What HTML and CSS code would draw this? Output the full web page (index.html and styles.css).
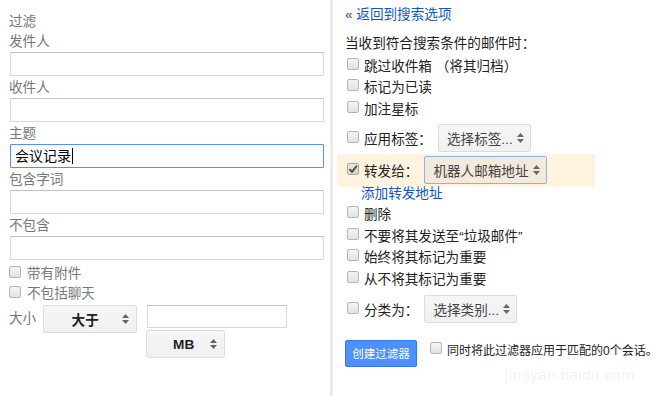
FILE: index.html
```html
<!DOCTYPE html>
<html>
  <head>
    <meta charset="utf-8">
    <link rel="stylesheet" href="styles.css">
  </head>
  <body>
    <div class="filter-page">
      <div class="search-panel">
        <div class="label">过滤</div>
        <div class="label">发件人</div>
        <input class="field" type="text" />
        <div class="label">收件人</div>
        <input class="field" type="text" />
        <div class="label">主题</div>
        <div class="field focused">会议记录<span class="caret"></span></div>
        <div class="label">包含字词</div>
        <input class="field" type="text" />
        <div class="label">不包含</div>
        <input class="field" type="text" />

        <div class="check-row"><span class="box"></span>带有附件</div>
        <div class="check-row"><span class="box"></span>不包括聊天</div>

        <div class="size-row">
          <span class="size-label">大小</span>
          <div class="select bold size-op">
            <span class="select-text">大于</span>
            <svg class="arrows" width="7" height="10" viewBox="0 0 7 10"><path d="M3.5 0 L7 4 H0 Z M0 6 H7 L3.5 10 Z" fill="#666"/></svg>
          </div>
          <div class="size-value">
            <input class="size-input" type="text" />
            <div class="select bold size-unit">
              <span class="select-text">MB</span>
              <svg class="arrows" width="7" height="10" viewBox="0 0 7 10"><path d="M3.5 0 L7 4 H0 Z M0 6 H7 L3.5 10 Z" fill="#666"/></svg>
            </div>
          </div>
        </div>
      </div>

      <div class="action-panel">
        <a class="link back" href="#">« 返回到搜索选项</a>
        <div class="heading">当收到符合搜索条件的邮件时：</div>

        <div class="option"><span class="box"></span>跳过收件箱 （将其归档）</div>
        <div class="option"><span class="box"></span>标记为已读</div>
        <div class="option"><span class="box"></span>加注星标</div>

        <div class="option with-select label-row">
          <span class="box"></span>应用标签：
          <div class="select choose">
            <span class="select-text">选择标签...</span>
            <svg class="arrows" width="7" height="10" viewBox="0 0 7 10"><path d="M3.5 0 L7 4 H0 Z M0 6 H7 L3.5 10 Z" fill="#666"/></svg>
          </div>
        </div>

        <div class="option with-select forward-row">
          <span class="box checked">
            <svg width="10" height="10" viewBox="0 0 10 10"><path d="M1.5 5.2 L4 7.8 L8.8 1.8" fill="none" stroke="#444" stroke-width="1.8"/></svg>
          </span>转发给：
          <div class="select address">
            <span class="select-text">机器人邮箱地址</span>
            <svg class="arrows" width="7" height="10" viewBox="0 0 7 10"><path d="M3.5 0 L7 4 H0 Z M0 6 H7 L3.5 10 Z" fill="#666"/></svg>
          </div>
        </div>
        <a class="link add-forward" href="#">添加转发地址</a>

        <div class="option"><span class="box"></span>删除</div>
        <div class="option"><span class="box"></span>不要将其发送至“垃圾邮件”</div>
        <div class="option"><span class="box"></span>始终将其标记为重要</div>
        <div class="option"><span class="box"></span>从不将其标记为重要</div>

        <div class="option with-select category-row">
          <span class="box"></span>分类为：
          <div class="select choose">
            <span class="select-text">选择类别...</span>
            <svg class="arrows" width="7" height="10" viewBox="0 0 7 10"><path d="M3.5 0 L7 4 H0 Z M0 6 H7 L3.5 10 Z" fill="#666"/></svg>
          </div>
        </div>

        <div class="submit-row">
          <button class="create-btn">创建过滤器</button>
          <div class="apply-all"><span class="box"></span>同时将此过滤器应用于匹配的0个会话。</div>
        </div>
      </div>
    </div>

    <div class="watermark">jingyan.baidu.com</div>
  </body>
</html>
```

FILE: styles.css
```css
body {
  margin: 0;
  background-color: #ffffff;
  font-family: "Liberation Sans", "Noto Sans CJK SC", sans-serif;
  font-size: 13.6px;
  color: #222;
}

.filter-page {
  display: flex;
  height: 396px;
}

/* left: search criteria */

.search-panel {
  width: 321px;
  padding: 12px 0 0 9px;
}

.label {
  line-height: 20px;
  height: 20px;
  color: #777;
}

.field {
  display: block;
  box-sizing: border-box;
  width: 314px;
  height: 24px;
  margin: 0 0 2px 1px;
  padding: 0 5px;
  border: 1px solid #d9d9d9;
  border-top-color: #c0c0c0;
  border-radius: 1px;
  font-family: inherit;
  font-size: 14px;
  outline: none;
}

.field.focused {
  border-color: #4d90fe;
  color: #000;
  line-height: 22px;
  padding-left: 4px;
}

.caret {
  display: inline-block;
  width: 1px;
  height: 16px;
  background-color: #000;
  vertical-align: -3px;
  margin-left: 1px;
}

.check-row {
  display: flex;
  align-items: center;
  height: 20px;
  color: #777;
}

.check-row .box {
  margin-right: 6px;
}

.box {
  display: inline-flex;
  align-items: center;
  justify-content: center;
  box-sizing: border-box;
  width: 12px;
  height: 12px;
  border: 1px solid #b5b5b5;
  border-radius: 2px;
  background: linear-gradient(#f3f3f3, #e2e2e2);
  flex-shrink: 0;
}

.box.checked {
  background: linear-gradient(#ece4d4, #ddd3c1);
  border-color: #aaa;
}

.size-row {
  display: flex;
  align-items: flex-start;
  margin-top: 3px;
}

.size-label {
  color: #777;
  line-height: 28px;
  margin-right: 7px;
}

.size-value {
  display: flex;
  flex-direction: column;
  margin-left: 9px;
}

.size-input {
  box-sizing: border-box;
  width: 140px;
  height: 23px;
  margin: 0 0 2px 1px;
  border: 1px solid #d9d9d9;
  border-top-color: #c0c0c0;
  outline: none;
}

/* shared select look */

.select {
  display: flex;
  align-items: center;
  box-sizing: border-box;
  height: 28px;
  padding: 0 7px 0 8px;
  border: 1px solid #dcdcdc;
  border-radius: 2px;
  background: linear-gradient(#f6f6f6, #f0f0f0);
  color: #444;
}

.select-text {
  flex: 1;
  white-space: nowrap;
}

.arrows {
  flex-shrink: 0;
  margin-left: 4px;
}

.select.bold {
  font-weight: bold;
  color: #222;
}

.select.bold .select-text {
  text-align: center;
}

.size-op {
  width: 94px;
}

.size-unit {
  width: 79px;
  padding-left: 14px;
}

/* right: actions */

.action-panel {
  flex: 1;
  border-left: 3px solid #ebebeb;
  padding: 5px 0 0 12px;
}

.link {
  color: #15c;
  text-decoration: none;
  display: block;
}

.back {
  line-height: 20px;
}

.heading {
  line-height: 20px;
  margin-top: 9px;
  color: #222;
}

.option {
  display: flex;
  align-items: center;
  height: 21.5px;
  white-space: nowrap;
}

.option .box {
  margin: -2px 5px 0 2px;
}

.with-select {
  height: 28px;
}

.with-select .select {
  margin-left: 6px;
}

.label-row {
  margin-top: 5px;
}

.forward-row {
  box-sizing: border-box;
  width: 258px;
  height: 33px;
  margin: 2px 0 0 -8px;
  padding-left: 8px;
  background-color: #fdf3de;
}

.choose {
  width: 93px;
}

.address {
  width: 123px;
  border-color: #8fb0e4;
  background: #f2eadb;
}

.add-forward {
  line-height: 18px;
  margin: -2px 0 0 16px;
}

.category-row {
  margin-top: 6px;
}

.submit-row {
  display: flex;
  align-items: flex-start;
  margin-top: 17px;
}

.create-btn {
  width: 72px;
  height: 27px;
  padding: 0;
  border: 1px solid #3079ed;
  border-radius: 2px;
  background-color: #4d90fe;
  color: #fff;
  font-family: inherit;
  font-size: 11.5px;
}

.apply-all {
  display: flex;
  align-items: center;
  margin: 4px 0 0 13px;
  font-size: 12px;
  line-height: 14px;
}

.apply-all .box {
  margin-right: 5px;
  margin-top: -5px;
}

.watermark {
  position: absolute;
  left: 505px;
  top: 366px;
  color: rgba(0, 0, 0, 0.07);
  font-size: 15px;
  line-height: 18px;
  letter-spacing: 0.5px;
  pointer-events: none;
}
```
